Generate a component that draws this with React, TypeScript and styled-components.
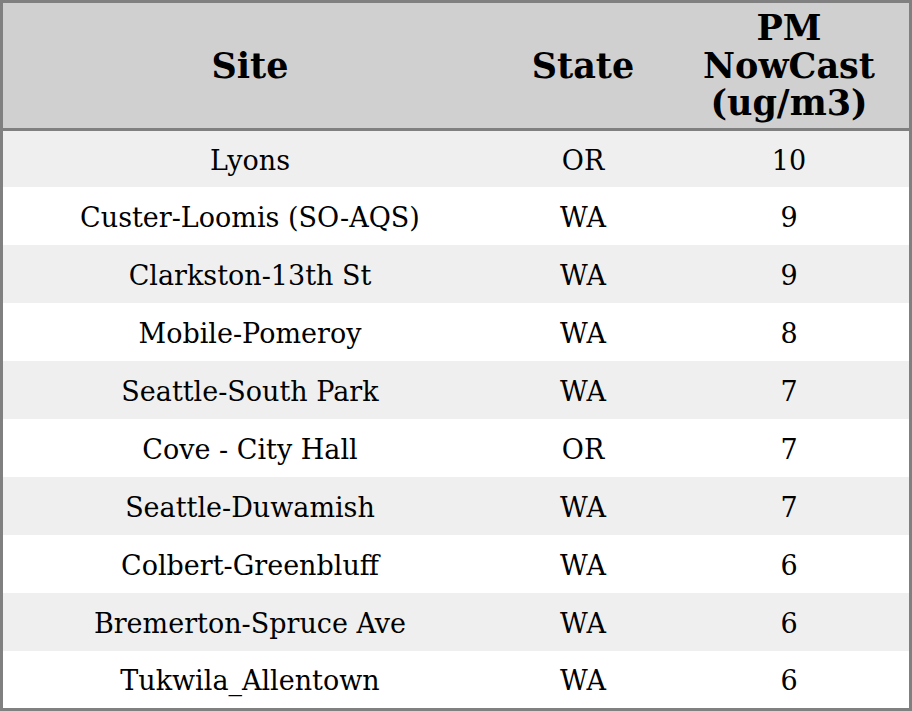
import styled, { createGlobalStyle } from "styled-components";

const GlobalStyle = createGlobalStyle`
  html, body {
    margin: 0;
    padding: 0;
    background: #ffffff;
  }
  body {
    font-family: "DejaVu Serif", serif;
    color: #000;
  }
`;

type Reading = { site: string; state: string; pm: number };

const readings: Reading[] = [
  { site: "Lyons", state: "OR", pm: 10 },
  { site: "Custer-Loomis (SO-AQS)", state: "WA", pm: 9 },
  { site: "Clarkston-13th St", state: "WA", pm: 9 },
  { site: "Mobile-Pomeroy", state: "WA", pm: 8 },
  { site: "Seattle-South Park", state: "WA", pm: 7 },
  { site: "Cove - City Hall", state: "OR", pm: 7 },
  { site: "Seattle-Duwamish", state: "WA", pm: 7 },
  { site: "Colbert-Greenbluff", state: "WA", pm: 6 },
  { site: "Bremerton-Spruce Ave", state: "WA", pm: 6 },
  { site: "Tukwila_Allentown", state: "WA", pm: 6 },
];

const Table = styled.table`
  width: 912px;
  border-collapse: collapse;
  border: 3px solid #808080;
  table-layout: fixed;
  font-family: "DejaVu Serif", serif;
`;

const HeadRow = styled.tr`
  background: #d0d0d0;
  border-bottom: 3px solid #808080;
`;

const Th = styled.th<{ $w: number }>`
  width: ${({ $w }) => $w}px;
  height: 125px;
  padding: 0;
  font-size: 35px;
  font-weight: bold;
  text-align: center;
  vertical-align: middle;
  line-height: 37.5px;
`;

const Row = styled.tr<{ $odd: boolean }>`
  background: ${({ $odd }) => ($odd ? "#efefef" : "#ffffff")};
  height: 58px;

  &:first-child {
    height: 57.5px;
  }
  &:last-child {
    height: 58.5px;
  }
`;

const Td = styled.td`
  padding: 2px 0 0;
  font-size: 27px;
  text-align: center;
  vertical-align: middle;
`;

export default function App() {
  return (
    <>
      <GlobalStyle />
      <Table>
        <thead>
          <HeadRow>
            <Th $w={494}>Site</Th>
            <Th $w={172}>State</Th>
            <Th $w={240}>
              PM
              <br />
              NowCast
              <br />
              (ug/m3)
            </Th>
          </HeadRow>
        </thead>
        <tbody>
          {readings.map((r, i) => (
            <Row key={r.site} $odd={i % 2 === 0}>
              <Td>{r.site}</Td>
              <Td>{r.state}</Td>
              <Td>{r.pm}</Td>
            </Row>
          ))}
        </tbody>
      </Table>
    </>
  );
}
